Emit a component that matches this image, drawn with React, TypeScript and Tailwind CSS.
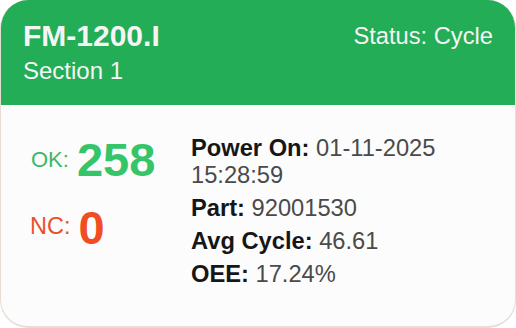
import React from "react"

const stats = [
  { label: "Power On:", value: "01-11-2025 15:28:59" },
  { label: "Part:", value: "92001530" },
  { label: "Avg Cycle:", value: "46.61" },
  { label: "OEE:", value: "17.24%" },
]

export default function App() {
  return (
    <div className="w-[516px] h-[328px] bg-white font-['Liberation_Sans',Arial,sans-serif]">
      <div className="w-[516px] h-[328px] rounded-[28px] overflow-hidden bg-[#fcfcfd] border-b-2 border-l border-r border-[#e6ddd3] flex flex-col">
        {/* header */}
        <div className="h-[105px] shrink-0 bg-[#22ad56] text-[#f6f4f4] pl-[22px] pr-[22px] pt-[19px] flex justify-between">
          <div>
            <div className="text-[30px] font-bold leading-[34px]">FM-1200.I</div>
            <div className="text-[24px] leading-[28px] mt-[4px]">Section 1</div>
          </div>
          <div className="text-[23.7px] leading-[28px] pt-[3px]">Status: Cycle</div>
        </div>

        {/* body */}
        <div className="flex pl-[29px] pr-[40px]">
          <div className="w-[161px] shrink-0 pt-[31px]">
            <div className="flex items-center gap-[8px] h-[46px] pl-[1px]">
              <span className="text-[22px] text-[#3cb865]">OK:</span>
              <span className="text-[47px] font-bold text-[#35c568] leading-none">258</span>
            </div>
            <div className="flex items-center gap-[8px] h-[46px] mt-[22px]">
              <span className="text-[23.5px] text-[#e8512b]">NC:</span>
              <span className="text-[47px] font-bold text-[#f04d22] leading-none">0</span>
            </div>
          </div>
          <div className="flex-1 pt-[30px] flex flex-col gap-[6px] text-[23.7px] leading-[27px] text-[#4a4a4a]">
            {stats.map((s) => (
              <div key={s.label}>
                <span className="font-bold text-[#161616]">{s.label}</span> {s.value}
              </div>
            ))}
          </div>
        </div>
      </div>
    </div>
  )
}
